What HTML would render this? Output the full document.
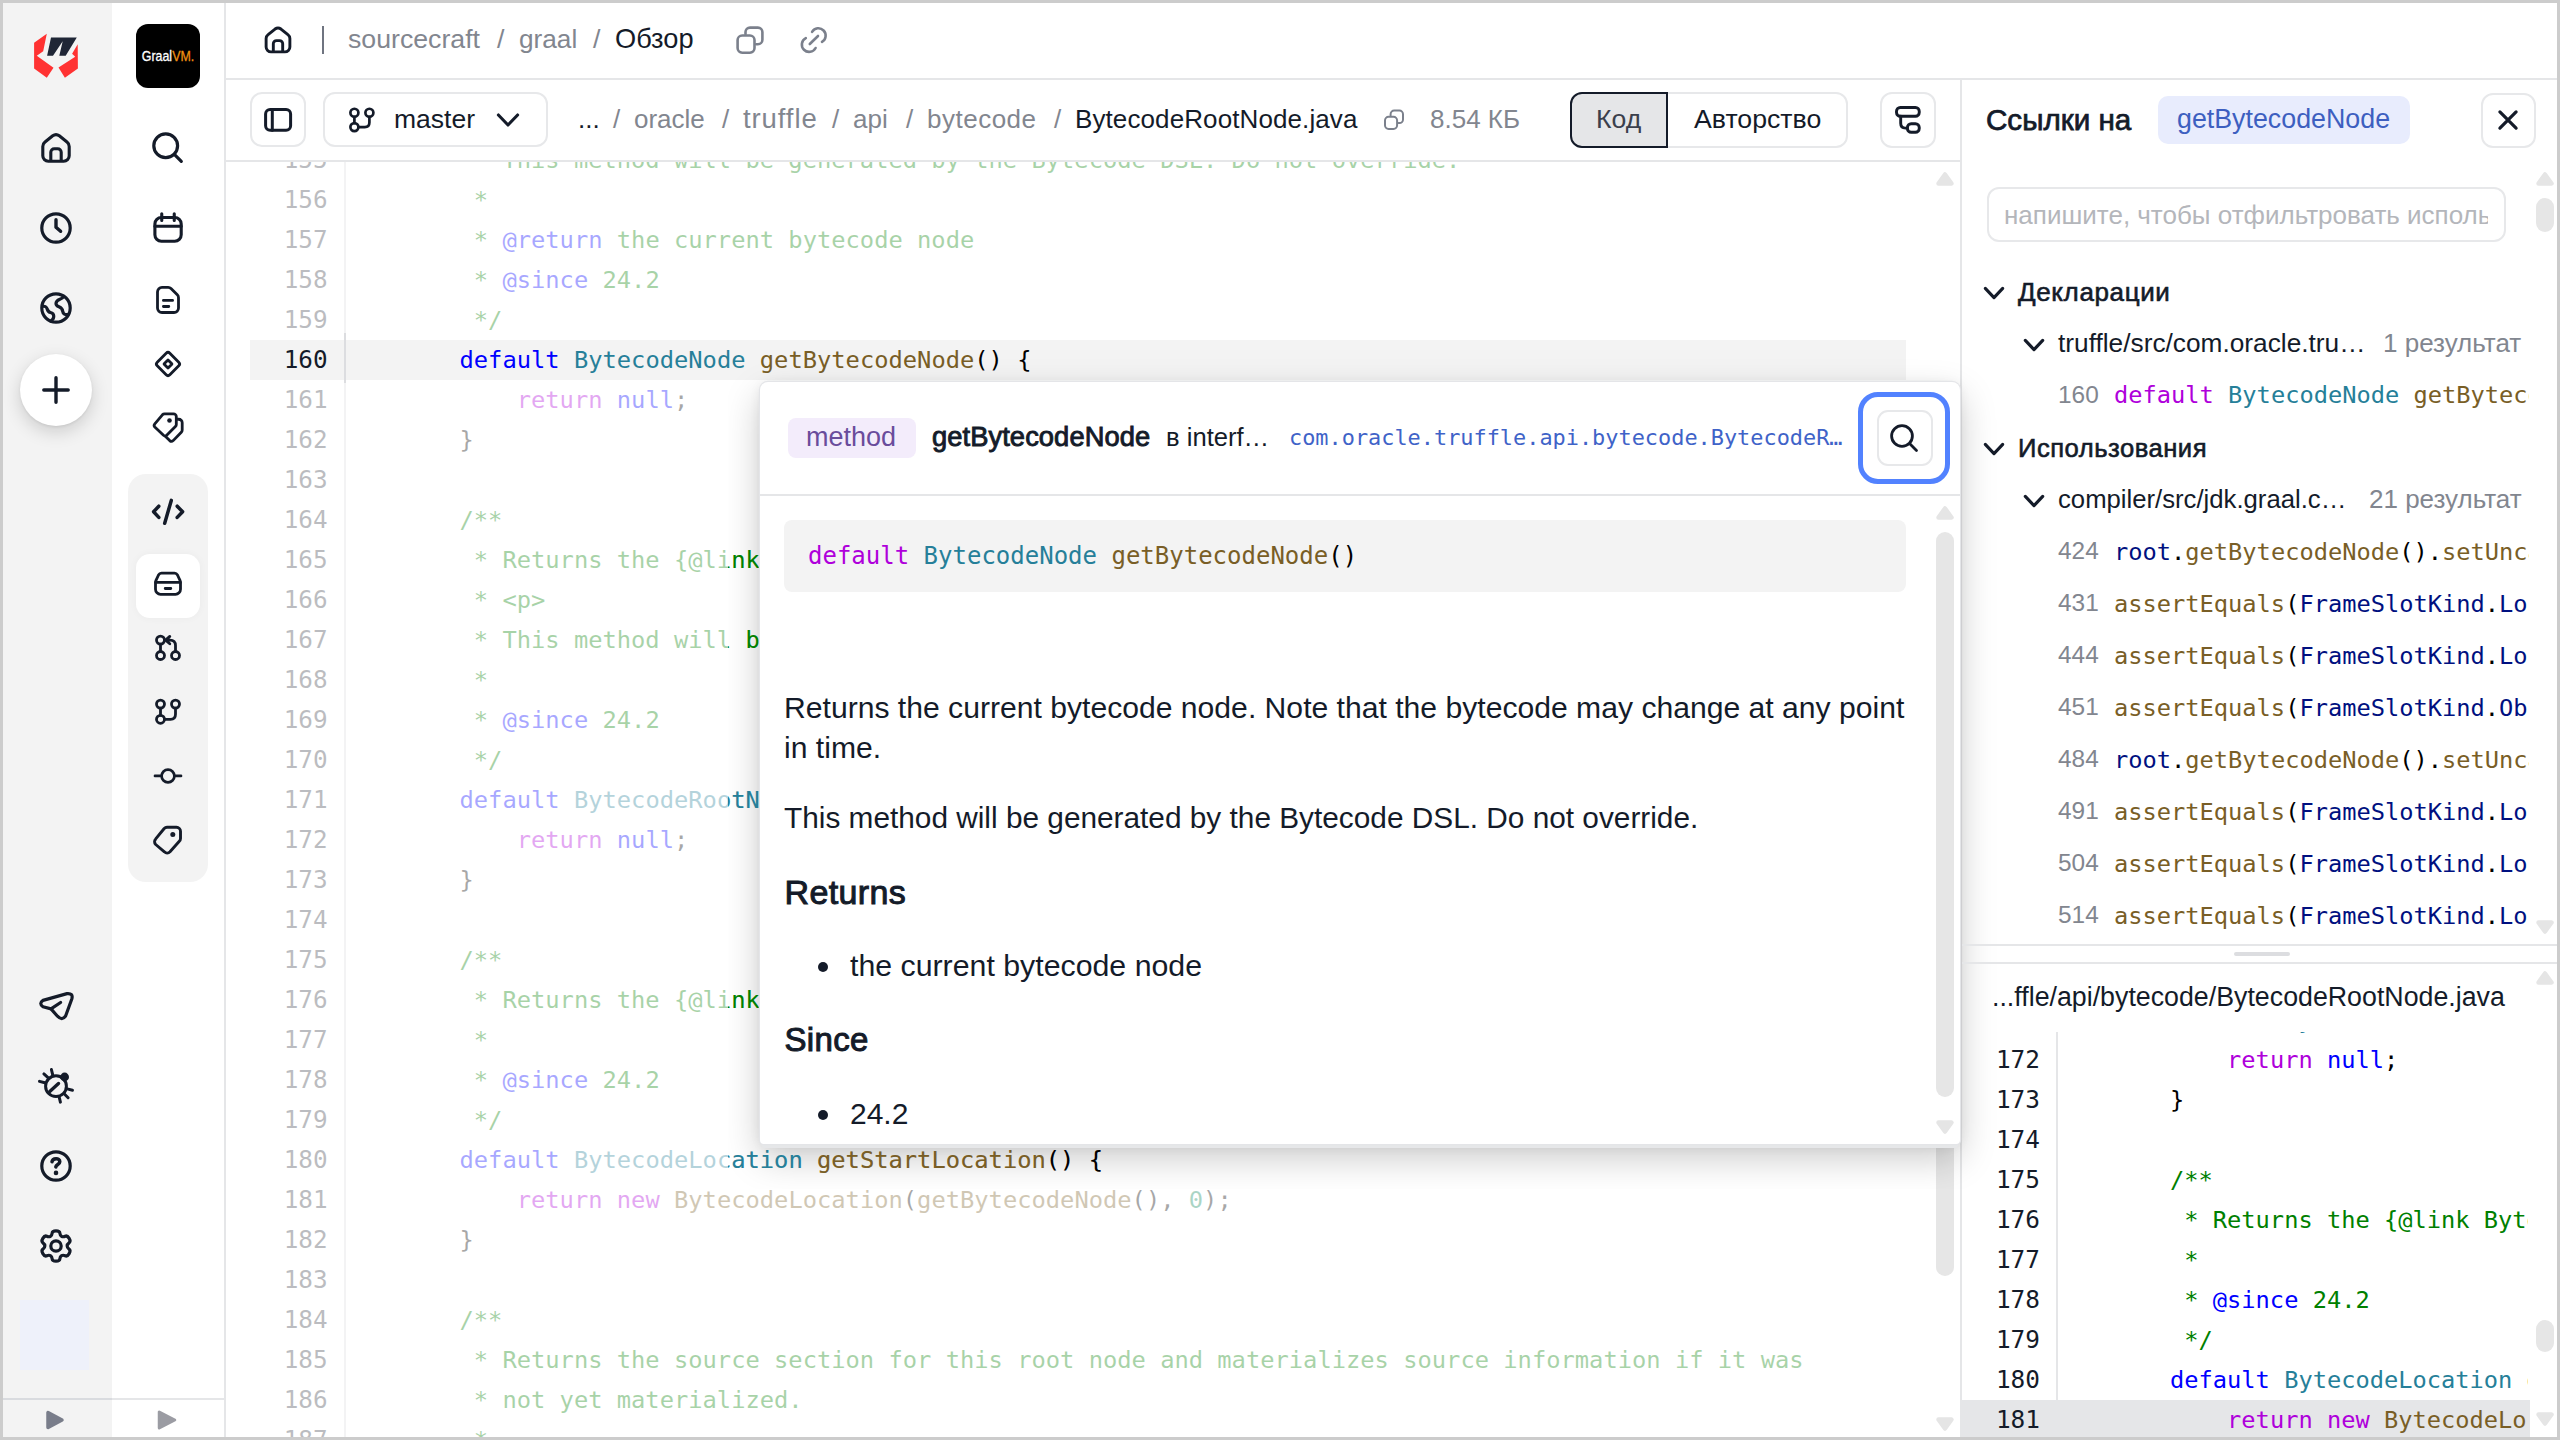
<!DOCTYPE html>
<html lang="ru">
<head>
<meta charset="utf-8">
<title>BytecodeRootNode.java — sourcecraft/graal</title>
<style>
*{box-sizing:border-box;margin:0;padding:0}
html,body{width:2560px;height:1440px;overflow:hidden;background:#fff}
body{font-family:"Liberation Sans",sans-serif;color:#141b29;position:relative;font-size:26px}
.abs{position:absolute}
svg{position:absolute;overflow:visible}
.ic{fill:none;stroke:#141b29;stroke-width:3;stroke-linecap:round;stroke-linejoin:round}
.mono{font-family:"DejaVu Sans Mono","Liberation Mono",monospace}
.t{position:absolute;white-space:pre;line-height:40px;height:40px}
.g{color:#82868f}
.md{-webkit-text-stroke:.6px currentColor}
.md2{-webkit-text-stroke:.75px currentColor}
.md3{-webkit-text-stroke:1px currentColor;letter-spacing:.35px}
/* frame */
#frame{position:absolute;left:0;top:0;width:2560px;height:1440px;border:3px solid #ccc;z-index:100;pointer-events:none}
/* rails */
#rail1{position:absolute;left:0;top:0;width:112px;height:1440px;background:#f3f3f3}
#rail2{position:absolute;left:112px;top:0;width:112px;height:1440px;background:#fff}
#vsep{position:absolute;left:224px;top:0;width:2px;height:1440px;background:#e5e6e8}
.hline{position:absolute;height:2px;background:#e5e6e8}
.btn{position:absolute;border:2px solid #e7e8ea;border-radius:12px;background:#fff}
/* code */
#codewrap{position:absolute;left:226px;top:162px;width:1734px;height:1278px;overflow:hidden;background:#fff}
.codelayer{position:absolute;left:-226px;top:-162px;width:2560px;height:1440px;font-family:"DejaVu Sans Mono","Liberation Mono",monospace;font-size:23.76px;line-height:40px;white-space:pre;color:#000}
.ln{position:absolute;left:250px;width:77.6px;text-align:right;height:40px;color:#3a3e48;font-size:24.3px}
.cl{position:absolute;left:402.3px;height:40px}
.faded .ln,.faded .cl{opacity:.34}
.faded .ln.act,.faded .cl.act{opacity:1}
.faded .ln.act{color:#141b29}
.clear .ln{display:none}
.k{color:#0000ff}.ty{color:#267f99}.f{color:#795e26}.c{color:#008000}.p{color:#af00db}.n{color:#098658}.v{color:#001080}
#actbg{position:absolute;left:250px;top:340px;width:1656px;height:40px;background:#f3f3f3}
#gutter{position:absolute;left:344px;top:162px;width:2px;height:1278px;background:#f3f3f4}
#gutteract{position:absolute;left:344px;top:333px;width:2px;height:50px;background:#dcdde0}
#clearclip{position:absolute;left:728px;top:382px;width:1232px;height:800px;overflow:hidden}
#clearclip .codelayer{left:-728px;top:-382px}
/* scrollbars */
.sbthumb{position:absolute;width:18px;border-radius:9px;background:#e6e6e6}
/* popup */
#popup{position:absolute;left:760px;top:382px;width:1200px;height:762px;background:#fff;border-radius:8px 8px 4px 4px;box-shadow:0 0 0 1.2px #e4e5e8}
/* right */
#right{position:absolute;left:1960px;top:80px;width:600px;height:1360px;background:#fff;border-left:2px solid #e5e6e8}
#rshadow{position:absolute;left:1962px;top:162px;width:30px;height:1278px;background:linear-gradient(90deg,rgba(0,0,0,.075),rgba(0,0,0,.04) 30%,rgba(0,0,0,.012) 70%,rgba(0,0,0,0));pointer-events:none}
.rnum{position:absolute;left:2058px;width:42px;height:40px;line-height:40px;color:#82868f;font-size:24.4px;white-space:pre}
.rcode{position:absolute;left:2114px;width:415px;overflow:hidden;height:40px;line-height:40px;white-space:pre;font-family:"DejaVu Sans Mono","Liberation Mono",monospace;font-size:23.7px;color:#000}
.pln{position:absolute;left:1988px;width:52px;text-align:right;height:40px;line-height:40px;font-family:"DejaVu Sans Mono","Liberation Mono",monospace;font-size:24.4px;color:#141b29;white-space:pre}
.pcl{position:absolute;left:2113px;width:415px;overflow:hidden;height:40px;line-height:40px;font-family:"DejaVu Sans Mono","Liberation Mono",monospace;font-size:23.7px;color:#000;white-space:pre}
</style>
</head>
<body>
<!-- ============ RAIL 1 ============ -->
<div id="rail1">
<div class="abs" style="left:20px;top:354px;width:72px;height:72px;border-radius:36px;background:#fff;box-shadow:0 6px 18px rgba(0,0,0,.16),0 1px 3px rgba(0,0,0,.08)"></div>
<div class="abs" style="left:19.5px;top:1300px;width:69.5px;height:69.5px;background:#eef1fa"></div>
<div class="hline" style="left:0;top:1398px;width:112px;background:#d9dbdf"></div>
</div>
<svg width="1" height="1" style="left:0;top:0"><polygon fill="#ff3232" points="46.8,33.8 34.1,42.7 34.1,68.5 46.8,77.7 53.5,67.7 36.8,55.7 43.2,51.3"/><polygon fill="#ff3232" points="77.7,44.3 77.9,68.5 64.9,77.7 58.5,67.4 75.2,56.8 72.1,53.8"/><polygon fill="#1f2636" points="51,37.4 76.8,37.4 65.7,55.7 59.3,55.7 62.7,41.2 53,55.7 47.1,55.7"/></svg>
<svg width="1" height="1" style="left:56px;top:148px" ><g fill="none" stroke="#141b29" stroke-width="3.1" stroke-linecap="round" stroke-linejoin="round"><g transform="scale(1.0)"><path d="M-7.7 13.2a5.5 5.5 0 0 1-5.5-5.5V-1.6a5.5 5.5 0 0 1 2.2-4.4L-3.3-12.2a5.5 5.5 0 0 1 6.6 0L11-6a5.5 5.5 0 0 1 2.2 4.4V7.7a5.5 5.5 0 0 1-5.5 5.5ZM-5.2 13.2V4.2a3.5 3.5 0 0 1 3.5-3.5h3.4a3.5 3.5 0 0 1 3.5 3.5V13.2"/></g></g></svg>
<svg width="1" height="1" style="left:56px;top:228px" ><g fill="none" stroke="#141b29" stroke-width="3.2" stroke-linecap="round" stroke-linejoin="round"><circle r="14.2"/><path d="M0-8.3V-0.8L4.6 3.3" stroke-width="3.4"/></g></svg>
<svg width="1" height="1" style="left:56px;top:308px" ><g fill="none" stroke="#141b29" stroke-width="3.2" stroke-linecap="round" stroke-linejoin="round"><circle r="14.2"/><path d="M7.5-11.7C6.5-8 0-9.5 0-4.6C0 0 6.3-2.5 6.7 3.3C7 6 9 7 12.5 6.3"/><path d="M-13.3-1.7C-7-2.5-10.5 3.5-5.5 4.5C-1 5.5-1.5 11-5 12.9"/></g></svg>
<svg width="1" height="1" style="left:56px;top:390px" ><g fill="none" stroke="#141b29" stroke-width="3.4" stroke-linecap="round" stroke-linejoin="round"><path d="M-12.2 0H12.2M0-12.2V12.2"/></g></svg>
<svg width="1" height="1" style="left:56px;top:1006px" ><g fill="none" stroke="#141b29" stroke-width="3.2" stroke-linecap="round" stroke-linejoin="round"><path d="M-5 2.9L-13 0.8Q-17.5-2.5-13-5.6L11-12.4Q17.5-13 15.8-7L9.6 10Q6 15 1.5 10.2Z"/><path d="M-5 2.9L4.6-3.5"/></g></svg>
<svg width="1" height="1" style="left:56px;top:1086px" ><g fill="none" stroke="#141b29" stroke-width="3.0" stroke-linecap="round" stroke-linejoin="round"><circle cx="0" cy="0.2" r="10.4"/><path d="M-6.25 5.4L2.5-2.5" stroke-width="3.4"/><circle cx="8.6" cy="-9" r="4.4" fill="#141b29" stroke="none"/><path d="M-4.6-16.5L-3.3-11.2M-12.1-12.1L-8-8.4M-16.5-4.6L-11.2-3.2M16.5 4.2L11.2 2.9M12.1 11.7L8.4 8M4.4 16.1L3.2 11.2"/></g></svg>
<svg width="1" height="1" style="left:56px;top:1166px" ><g fill="none" stroke="#141b29" stroke-width="3.2" stroke-linecap="round" stroke-linejoin="round"><circle r="14.2"/><path d="M-4-4.2C-3.5-8 3.8-8.5 3.8-4.2C3.8-1.5 0-1.5-0.2 1" stroke-width="3.5"/><circle cx="0" cy="6.9" r="2.3" fill="#141b29" stroke="none"/></g></svg>
<svg width="1" height="1" style="left:56px;top:1246px" ><g fill="none" stroke="#141b29" stroke-width="3.2" stroke-linecap="round" stroke-linejoin="round"><path d="M-3.85 -12.86Q-3.64 -15.17 0.00 -15.17Q3.64 -15.17 3.85 -12.86Q4.05 -10.55 5.58 -9.67Q7.11 -8.78 9.21 -9.76Q11.32 -10.74 13.14 -7.58Q14.96 -4.43 13.06 -3.10Q11.16 -1.77 11.16 0.00Q11.16 1.77 13.06 3.10Q14.96 4.43 13.14 7.58Q11.32 10.74 9.21 9.76Q7.11 8.78 5.58 9.67Q4.05 10.55 3.85 12.86Q3.64 15.17 0.00 15.17Q-3.64 15.17 -3.85 12.86Q-4.05 10.55 -5.58 9.67Q-7.11 8.78 -9.21 9.76Q-11.32 10.74 -13.14 7.58Q-14.96 4.43 -13.06 3.10Q-11.16 1.77 -11.16 0.00Q-11.16 -1.77 -13.06 -3.10Q-14.96 -4.43 -13.14 -7.58Q-11.32 -10.74 -9.21 -9.76Q-7.11 -8.78 -5.58 -9.67Q-4.05 -10.55 -3.85 -12.86Z"/><circle r="5.2"/></g></svg>
<svg width="1" height="1" style="left:55px;top:1419.5px"><polygon points="7.0,0 -7.0,-7.5 -7.0,7.5" fill="#797d8a" stroke="#797d8a" stroke-width="3.5" stroke-linejoin="round"/></svg>
<!-- ============ RAIL 2 ============ -->
<div id="rail2">
<div class="abs" style="left:24px;top:24px;width:64px;height:64px;border-radius:12px;background:#000"></div>
<div class="abs" style="left:24px;top:24px;width:64px;height:64px;line-height:64px;text-align:center;font-size:14.6px;color:#fff;font-weight:400;-webkit-text-stroke:.3px currentColor;transform:scaleX(.85)">Graal<span style="color:#f29111">VM.</span></div>
<div class="abs" style="left:16px;top:474px;width:80px;height:408px;border-radius:18px;background:#f3f3f3"></div>
<div class="abs" style="left:24px;top:554px;width:64px;height:64px;border-radius:14px;background:#fff;box-shadow:0 0 8px rgba(0,0,0,.04)"></div>
<div class="hline" style="left:0;top:1398px;width:112px"></div>

</div>
<svg width="1" height="1" style="left:168px;top:148px" ><g fill="none" stroke="#141b29" stroke-width="3.2" stroke-linecap="round" stroke-linejoin="round"><circle cx="-2.3" cy="-2.3" r="11.9"/><path d="M6.6 6.6L13.3 13.3"/></g></svg>
<svg width="1" height="1" style="left:168px;top:228px" ><g fill="none" stroke="#141b29" stroke-width="3.1" stroke-linecap="round" stroke-linejoin="round"><rect x="-13.1" y="-10.5" width="26.3" height="23.7" rx="6.5"/><path d="M-13.1-1.7H13.2M-6.25-14.2V-7.5M6.25-14.2V-7.5"/></g></svg>
<svg width="1" height="1" style="left:168px;top:300px" ><g fill="none" stroke="#141b29" stroke-width="2.8" stroke-linecap="round" stroke-linejoin="round"><path d="M-6-12.6H0.2Q1.8-12.6 3-11.4L9.3-5.2Q10.5-4 10.5-2.3V8a4.5 4.5 0 0 1-4.5 4.5H-6a4.5 4.5 0 0 1-4.5-4.5V-8.1a4.5 4.5 0 0 1 4.5-4.5Z"/><path d="M-4.6 0.4H4.6M-4.6 6.5H0.8"/></g></svg>
<svg width="1" height="1" style="left:168px;top:364px" ><g fill="none" stroke="#141b29" stroke-width="2.8" stroke-linecap="round" stroke-linejoin="round"><rect x="-8.9" y="-8.9" width="17.8" height="17.8" rx="2.6" transform="rotate(45)"/><rect x="-2.9" y="-2.9" width="5.8" height="5.8" rx="0.4" transform="rotate(45)"/></g></svg>
<svg width="1" height="1" style="left:168px;top:428px" ><g fill="none" stroke="#141b29" stroke-width="2.8" stroke-linecap="round" stroke-linejoin="round"><path d="M-3.5-14.2H5.5a2.8 2.8 0 0 1 2.8 2.8V-3.6Q8.3-2.4 7.4-1.5L-1.3 7.2Q-2.9 8.6-4.5 7.2L-13.2-1Q-14.6-2.6-13.2-4.2L-5.6-13.2Q-4.7-14.2-3.5-14.2Z"/><path d="M9.6-8.75H10.7a3.5 3.5 0 0 1 3.5 3.5V2Q14.2 3.3 13.3 4.2L5.2 12.6Q3.5 14.2 1.7 12.6L-2.7 8.2"/><circle cx="1.5" cy="-7.5" r="2.3" fill="#141b29" stroke="none"/></g></svg>
<svg width="1" height="1" style="left:168px;top:512px" ><g fill="none" stroke="#141b29" stroke-width="3.5" stroke-linecap="round" stroke-linejoin="round"><path d="M-9.2-5.8L-14.4-0.2L-9.2 5.4M9.2-5.8L14.6-0.2L9.2 5.4M3.3-11.6L-3.3 11.2"/></g></svg>
<svg width="1" height="1" style="left:168px;top:584px" ><g fill="none" stroke="#141b29" stroke-width="2.8" stroke-linecap="round" stroke-linejoin="round"><path d="M-6.5-10.8H6.5Q8.5-10.8 9.5-9L12-3.7Q12.5-2.6 12.5-1.2V5.3a5 5 0 0 1-5 5H-7.5a5 5 0 0 1-5-5V-1.2Q-12.5-2.6-12-3.7L-9.5-9Q-8.5-10.8-6.5-10.8Z"/><path d="M-12.3-1.6H12.3M-2.8 4.5H2.8"/></g></svg>
<svg width="1" height="1" style="left:168px;top:648px" ><g fill="none" stroke="#141b29" stroke-width="2.8" stroke-linecap="round" stroke-linejoin="round"><circle cx="-7.5" cy="-7.9" r="4"/><circle cx="-7.5" cy="7.5" r="4"/><circle cx="7.5" cy="7.5" r="4"/><path d="M-7.5-3.9V3.5M7.5 3.5V-2.5Q7.5-7.9 2-7.9H-2M1.8-11.6L-2.4-7.9L1.8-4.2"/></g></svg>
<svg width="1" height="1" style="left:168px;top:712px" ><g fill="none" stroke="#141b29" stroke-width="2.8" stroke-linecap="round" stroke-linejoin="round"><circle cx="-7.5" cy="-7.9" r="4"/><circle cx="7.5" cy="-7.9" r="4"/><circle cx="-7.5" cy="7.3" r="4"/><path d="M-7.5-3.9V3.3M7.5-3.9V2.3Q7.5 7.3 2.5 7.3H-3.5"/></g></svg>
<svg width="1" height="1" style="left:168px;top:776px" ><g fill="none" stroke="#141b29" stroke-width="2.7" stroke-linecap="round" stroke-linejoin="round"><circle r="6.4"/><path d="M-13-0.1H-7.2M7.2-0.1H13"/></g></svg>
<svg width="1" height="1" style="left:168px;top:840px" ><g fill="none" stroke="#141b29" stroke-width="2.9" stroke-linecap="round" stroke-linejoin="round"><path d="M-1-12.7H8.5a4 4 0 0 1 4 4V-1.5a4 4 0 0 1-1.2 2.8L2 11.8a4 4 0 0 1-5.6 0L-12.3 4.5a4 4 0 0 1 0-5.6L-3.8-11.5a4 4 0 0 1 2.8-1.2Z"/><circle cx="4.8" cy="-5.4" r="2.5" fill="#141b29" stroke="none"/></g></svg>
<svg width="1" height="1" style="left:167px;top:1420px"><polygon points="7.75,0 -7.75,-8.0 -7.75,8.0" fill="#9b9ca3" stroke="#9b9ca3" stroke-width="3" stroke-linejoin="round"/></svg>
<div id="vsep"></div>
<!-- ============ TOP BAR ============ -->
<div class="abs" id="topbar" style="left:226px;top:0;width:2334px;height:78px;background:#fff">
<div class="abs" style="left:96px;top:26px;width:2px;height:28px;background:#6f7480"></div>
<div class="t g" style="left:122px;top:19px;font-size:26.7px">sourcecraft</div>
<div class="t g" style="left:271px;top:19px;font-size:26.7px">/</div>
<div class="t g" style="left:293px;top:19px;font-size:26.2px">graal</div>
<div class="t g" style="left:367px;top:19px;font-size:26.7px">/</div>
<div class="t" style="left:389px;top:19px;font-size:27.2px">Обзор</div>

</div>
<svg width="1" height="1" style="left:278px;top:40px" ><g fill="none" stroke="#141b29" stroke-width="3.222222222222222" stroke-linecap="round" stroke-linejoin="round"><g transform="scale(0.9)"><path d="M-7.7 13.2a5.5 5.5 0 0 1-5.5-5.5V-1.6a5.5 5.5 0 0 1 2.2-4.4L-3.3-12.2a5.5 5.5 0 0 1 6.6 0L11-6a5.5 5.5 0 0 1 2.2 4.4V7.7a5.5 5.5 0 0 1-5.5 5.5ZM-5.2 13.2V4.2a3.5 3.5 0 0 1 3.5-3.5h3.4a3.5 3.5 0 0 1 3.5 3.5V13.2"/></g></g></svg>
<svg width="1" height="1" style="left:0px;top:0px" ><g fill="none" stroke="#7b808c" stroke-width="2.6" stroke-linecap="round" stroke-linejoin="round"><rect x="737.6" y="35.5" width="16.9" height="17.2" rx="4.6"/><path d="M745.5 34V32.1a4.5 4.5 0 0 1 4.5-4.5H757.9a4.5 4.5 0 0 1 4.5 4.5V39.7a4.5 4.5 0 0 1-4.5 4.5H756.2"/></g></svg>
<svg width="1" height="1" style="left:0px;top:0px" ><g fill="none" stroke="#7b808c" stroke-width="2.6" stroke-linecap="round" stroke-linejoin="round"><path d="M809.8 44L818 36"/><path d="M812.1 31.8A7.3 7.3 0 1 1 822 41.9"/><path d="M815.6 48A7.3 7.3 0 1 1 805.8 38.1"/></g></svg>
<div class="hline" style="left:226px;top:78px;width:2334px"></div>
<!-- ============ FILE BAR ============ -->
<div class="abs" id="filebar" style="left:226px;top:80px;width:1734px;height:80px;background:#fff">
<div class="btn" style="left:24.3px;top:12px;width:55.3px;height:55.3px"></div>
<div class="btn" style="left:96.5px;top:12px;width:225px;height:55px"></div>
<div class="t" style="left:168px;top:19px;font-size:26.5px">master</div>
<div class="t" style="left:352px;top:19px">...</div>
<div class="t g" style="left:387px;top:19px">/</div>
<div class="t g" style="left:408px;top:19px">oracle</div>
<div class="t g" style="left:496px;top:19px">/</div>
<div class="t g" style="left:517px;top:19px;font-size:27.5px;letter-spacing:.9px">truffle</div>
<div class="t g" style="left:606px;top:19px">/</div>
<div class="t g" style="left:627px;top:19px">api</div>
<div class="t g" style="left:680px;top:19px">/</div>
<div class="t g" style="left:701px;top:19px;letter-spacing:.5px">bytecode</div>
<div class="t g" style="left:828px;top:19px">/</div>
<div class="t" style="left:849px;top:19px;letter-spacing:.1px">BytecodeRootNode.java</div>
<div class="t g" style="left:1204px;top:19px">8.54 КБ</div>
<div class="abs" style="left:1344px;top:12px;width:278px;height:56px;border:2px solid #e7e8ea;border-radius:12px"></div>
<div class="abs" style="left:1344px;top:12px;width:98px;height:56px;border:2px solid #141b29;border-radius:12px 0 0 12px;background:#e5e6e8"></div>
<div class="t" style="left:1370px;top:19px;color:#3b404c;font-size:26.6px">Код</div>
<div class="t" style="left:1468px;top:19px;font-size:26.7px">Авторство</div>
<div class="btn" style="left:1654.3px;top:12px;width:55.5px;height:55.5px"></div>

</div>
<svg width="1" height="1" style="left:0px;top:0px" ><g fill="none" stroke="#141b29" stroke-width="3" stroke-linecap="round" stroke-linejoin="round"><rect x="265.6" y="109.6" width="25" height="20.7" rx="4.5"/><path d="M272.3 109.6V130.3"/></g></svg>
<svg width="1" height="1" style="left:0px;top:0px" ><g fill="none" stroke="#141b29" stroke-width="2.7" stroke-linecap="round" stroke-linejoin="round"><circle cx="354.4" cy="112.75" r="4"/><circle cx="369.4" cy="112.75" r="4"/><circle cx="354.4" cy="127.1" r="4"/><path d="M354.4 116.75V123.1M369.4 116.75V122.5Q369.4 127.1 364.8 127.1H358.4"/></g></svg>
<svg width="1" height="1" style="left:507.8px;top:120.2px" ><g fill="none" stroke="#141b29" stroke-width="3.1" stroke-linecap="round" stroke-linejoin="round"><path d="M-9.6 -5L0 5L9.6 -5"/></g></svg>
<svg width="1" height="1" style="left:0px;top:0px" ><g fill="none" stroke="#7b808c" stroke-width="2" stroke-linecap="round" stroke-linejoin="round"><rect x="1385" y="116.8" width="12.1" height="12.1" rx="3.6"/><path d="M1390.6 115.6V114.2a3.6 3.6 0 0 1 3.6-3.6H1399.4a3.6 3.6 0 0 1 3.6 3.6V119.4a3.6 3.6 0 0 1-3.6 3.6H1398.4"/></g></svg>
<svg width="1" height="1" style="left:0px;top:0px" ><g fill="none" stroke="#141b29" stroke-width="2.9" stroke-linecap="round" stroke-linejoin="round"><rect x="1896.5" y="107.5" width="22.75" height="8.75" rx="3.8"/><rect x="1907.4" y="123.75" width="11.85" height="8.55" rx="3.8"/><path d="M1900.7 116.25V123.3Q1900.7 128.1 1905.4 128.1H1907.4"/></g></svg>
<div class="hline" style="left:226px;top:160px;width:2334px"></div>
<!-- ============ CODE ============ -->
<div id="codewrap">
<div class="abs" style="left:0;top:0;width:1734px;height:1278px">
</div>
</div>
<div id="actbg"></div>
<div id="gutter"></div><div id="gutteract"></div>
<div class="abs" style="left:226px;top:162px;width:1734px;height:1278px;overflow:hidden"><div class="codelayer faded"><div class="ln" style="top:140px">155</div><div class="cl" style="top:140px"><span class="c">     * This method will be generated by the Bytecode DSL. Do not override.</span></div><div class="ln" style="top:180px">156</div><div class="cl" style="top:180px"><span class="c">     *</span></div><div class="ln" style="top:220px">157</div><div class="cl" style="top:220px"><span class="c">     * </span><span class="k">@return</span><span class="c"> the current bytecode node</span></div><div class="ln" style="top:260px">158</div><div class="cl" style="top:260px"><span class="c">     * </span><span class="k">@since</span><span class="c"> 24.2</span></div><div class="ln" style="top:300px">159</div><div class="cl" style="top:300px"><span class="c">     */</span></div><div class="ln act" style="top:340px">160</div><div class="cl act" style="top:340px">    <span class="k">default</span> <span class="ty">BytecodeNode</span> <span class="f">getBytecodeNode</span>() {</div><div class="ln" style="top:380px">161</div><div class="cl" style="top:380px">        <span class="p">return</span> <span class="k">null</span>;</div><div class="ln" style="top:420px">162</div><div class="cl" style="top:420px">    }</div><div class="ln" style="top:460px">163</div><div class="cl" style="top:460px"></div><div class="ln" style="top:500px">164</div><div class="cl" style="top:500px"><span class="c">    /**</span></div><div class="ln" style="top:540px">165</div><div class="cl" style="top:540px"><span class="c">     * Returns the {@link BytecodeRootNodes} instance associated with this root node.</span></div><div class="ln" style="top:580px">166</div><div class="cl" style="top:580px"><span class="c">     * &lt;p&gt;</span></div><div class="ln" style="top:620px">167</div><div class="cl" style="top:620px"><span class="c">     * This method will be generated by the Bytecode DSL. Do not override.</span></div><div class="ln" style="top:660px">168</div><div class="cl" style="top:660px"><span class="c">     *</span></div><div class="ln" style="top:700px">169</div><div class="cl" style="top:700px"><span class="c">     * </span><span class="k">@since</span><span class="c"> 24.2</span></div><div class="ln" style="top:740px">170</div><div class="cl" style="top:740px"><span class="c">     */</span></div><div class="ln" style="top:780px">171</div><div class="cl" style="top:780px">    <span class="k">default</span> <span class="ty">BytecodeRootNodes</span>&lt;?&gt; <span class="f">getRootNodes</span>() {</div><div class="ln" style="top:820px">172</div><div class="cl" style="top:820px">        <span class="p">return</span> <span class="k">null</span>;</div><div class="ln" style="top:860px">173</div><div class="cl" style="top:860px">    }</div><div class="ln" style="top:900px">174</div><div class="cl" style="top:900px"></div><div class="ln" style="top:940px">175</div><div class="cl" style="top:940px"><span class="c">    /**</span></div><div class="ln" style="top:980px">176</div><div class="cl" style="top:980px"><span class="c">     * Returns the {@link BytecodeLocation} associated with the start of this root node.</span></div><div class="ln" style="top:1020px">177</div><div class="cl" style="top:1020px"><span class="c">     *</span></div><div class="ln" style="top:1060px">178</div><div class="cl" style="top:1060px"><span class="c">     * </span><span class="k">@since</span><span class="c"> 24.2</span></div><div class="ln" style="top:1100px">179</div><div class="cl" style="top:1100px"><span class="c">     */</span></div><div class="ln" style="top:1140px">180</div><div class="cl" style="top:1140px">    <span class="k">default</span> <span class="ty">BytecodeLocation</span> <span class="f">getStartLocation</span>() {</div><div class="ln" style="top:1180px">181</div><div class="cl" style="top:1180px">        <span class="p">return</span> <span class="p">new</span> <span class="f">BytecodeLocation</span>(<span class="f">getBytecodeNode</span>(), <span class="n">0</span>);</div><div class="ln" style="top:1220px">182</div><div class="cl" style="top:1220px">    }</div><div class="ln" style="top:1260px">183</div><div class="cl" style="top:1260px"></div><div class="ln" style="top:1300px">184</div><div class="cl" style="top:1300px"><span class="c">    /**</span></div><div class="ln" style="top:1340px">185</div><div class="cl" style="top:1340px"><span class="c">     * Returns the source section for this root node and materializes source information if it was</span></div><div class="ln" style="top:1380px">186</div><div class="cl" style="top:1380px"><span class="c">     * not yet materialized.</span></div><div class="ln" style="top:1420px">187</div><div class="cl" style="top:1420px"><span class="c">     *</span></div></div></div>
<!-- main scrollbar -->
<svg width="1" height="1" style="left:1945px;top:178.5px"><polygon points="0,-4.5 6.5,4.5 -6.5,4.5" fill="#e5e5e5" stroke="#e5e5e5" stroke-width="4.5" stroke-linejoin="round"/></svg><svg width="1" height="1" style="left:1945px;top:1423.5px"><polygon points="0,4.5 6.5,-4.5 -6.5,-4.5" fill="#e5e5e5" stroke="#e5e5e5" stroke-width="4.5" stroke-linejoin="round"/></svg>
<div class="sbthumb" style="left:1936px;top:1100px;height:176px"></div>
<!-- popup shadow + clear code -->
<div id="right"></div>
<div class="abs" style="left:728px;top:300px;width:1300px;height:889px;overflow:hidden;pointer-events:none"><div class="abs" style="left:32px;top:82px;width:1200px;height:762px;border-radius:8px;box-shadow:0 14px 36px rgba(0,0,0,.21),0 2px 12px rgba(0,0,0,.07)"></div></div>
<div class="abs" style="left:762px;top:1143px;width:1196px;height:5px;background:#e6e7e9;border-radius:0 0 3px 3px"></div>
<div id="clearclip"><div class="codelayer clear"><div class="ln" style="top:140px">155</div><div class="cl" style="top:140px"><span class="c">     * This method will be generated by the Bytecode DSL. Do not override.</span></div><div class="ln" style="top:180px">156</div><div class="cl" style="top:180px"><span class="c">     *</span></div><div class="ln" style="top:220px">157</div><div class="cl" style="top:220px"><span class="c">     * </span><span class="k">@return</span><span class="c"> the current bytecode node</span></div><div class="ln" style="top:260px">158</div><div class="cl" style="top:260px"><span class="c">     * </span><span class="k">@since</span><span class="c"> 24.2</span></div><div class="ln" style="top:300px">159</div><div class="cl" style="top:300px"><span class="c">     */</span></div><div class="ln act" style="top:340px">160</div><div class="cl act" style="top:340px">    <span class="k">default</span> <span class="ty">BytecodeNode</span> <span class="f">getBytecodeNode</span>() {</div><div class="ln" style="top:380px">161</div><div class="cl" style="top:380px">        <span class="p">return</span> <span class="k">null</span>;</div><div class="ln" style="top:420px">162</div><div class="cl" style="top:420px">    }</div><div class="ln" style="top:460px">163</div><div class="cl" style="top:460px"></div><div class="ln" style="top:500px">164</div><div class="cl" style="top:500px"><span class="c">    /**</span></div><div class="ln" style="top:540px">165</div><div class="cl" style="top:540px"><span class="c">     * Returns the {@link BytecodeRootNodes} instance associated with this root node.</span></div><div class="ln" style="top:580px">166</div><div class="cl" style="top:580px"><span class="c">     * &lt;p&gt;</span></div><div class="ln" style="top:620px">167</div><div class="cl" style="top:620px"><span class="c">     * This method will be generated by the Bytecode DSL. Do not override.</span></div><div class="ln" style="top:660px">168</div><div class="cl" style="top:660px"><span class="c">     *</span></div><div class="ln" style="top:700px">169</div><div class="cl" style="top:700px"><span class="c">     * </span><span class="k">@since</span><span class="c"> 24.2</span></div><div class="ln" style="top:740px">170</div><div class="cl" style="top:740px"><span class="c">     */</span></div><div class="ln" style="top:780px">171</div><div class="cl" style="top:780px">    <span class="k">default</span> <span class="ty">BytecodeRootNodes</span>&lt;?&gt; <span class="f">getRootNodes</span>() {</div><div class="ln" style="top:820px">172</div><div class="cl" style="top:820px">        <span class="p">return</span> <span class="k">null</span>;</div><div class="ln" style="top:860px">173</div><div class="cl" style="top:860px">    }</div><div class="ln" style="top:900px">174</div><div class="cl" style="top:900px"></div><div class="ln" style="top:940px">175</div><div class="cl" style="top:940px"><span class="c">    /**</span></div><div class="ln" style="top:980px">176</div><div class="cl" style="top:980px"><span class="c">     * Returns the {@link BytecodeLocation} associated with the start of this root node.</span></div><div class="ln" style="top:1020px">177</div><div class="cl" style="top:1020px"><span class="c">     *</span></div><div class="ln" style="top:1060px">178</div><div class="cl" style="top:1060px"><span class="c">     * </span><span class="k">@since</span><span class="c"> 24.2</span></div><div class="ln" style="top:1100px">179</div><div class="cl" style="top:1100px"><span class="c">     */</span></div><div class="ln" style="top:1140px">180</div><div class="cl" style="top:1140px">    <span class="k">default</span> <span class="ty">BytecodeLocation</span> <span class="f">getStartLocation</span>() {</div><div class="ln" style="top:1180px">181</div><div class="cl" style="top:1180px">        <span class="p">return</span> <span class="p">new</span> <span class="f">BytecodeLocation</span>(<span class="f">getBytecodeNode</span>(), <span class="n">0</span>);</div><div class="ln" style="top:1220px">182</div><div class="cl" style="top:1220px">    }</div><div class="ln" style="top:1260px">183</div><div class="cl" style="top:1260px"></div><div class="ln" style="top:1300px">184</div><div class="cl" style="top:1300px"><span class="c">    /**</span></div><div class="ln" style="top:1340px">185</div><div class="cl" style="top:1340px"><span class="c">     * Returns the source section for this root node and materializes source information if it was</span></div><div class="ln" style="top:1380px">186</div><div class="cl" style="top:1380px"><span class="c">     * not yet materialized.</span></div><div class="ln" style="top:1420px">187</div><div class="cl" style="top:1420px"><span class="c">     *</span></div></div></div>
<!-- ============ POPUP ============ -->
<div id="popup">
<div class="abs" style="left:28px;top:36px;width:128px;height:40px;border-radius:8px;background:#f3ecfb"></div>
<div class="t" style="left:46px;top:35px;color:#6a4c9c;font-size:27px">method</div>
<div class="t" style="left:172px;top:35px;font-size:27.3px;-webkit-text-stroke:.9px currentColor;letter-spacing:.08px">getBytecodeNode</div>
<div class="t" style="left:406px;top:35px;font-size:25.6px">в interf…</div>
<div class="t mono" style="left:529px;top:36px;font-size:21.9px;color:#3f63c8">com.oracle.truffle.api.bytecode.BytecodeR…</div>
<div class="abs" style="left:1098px;top:10px;width:92px;height:92px;border:5px solid #5282ff;border-radius:20px"></div>
<div class="btn" style="left:1116.5px;top:28px;width:56px;height:56px;border-width:2px;border-radius:11px"></div>
<div class="hline" style="left:0;top:112px;width:1200px"></div>
<div class="abs" style="left:24px;top:138px;width:1122px;height:72px;border-radius:8px;background:#f3f3f3"></div>
<div class="t mono" style="left:48px;top:154px;font-size:24px;color:#000"><span class="p">default</span> <span class="ty">BytecodeNode</span> <span class="f">getBytecodeNode</span>()</div>
<div class="t" style="left:24px;top:306px;font-size:30.13px">Returns the current bytecode node. Note that the bytecode may change at any point</div>
<div class="t" style="left:24px;top:346px;font-size:30.13px">in time.</div>
<div class="t" style="left:24px;top:416px;font-size:29.8px">This method will be generated by the Bytecode DSL. Do not override.</div>
<div class="t md3" style="left:24.5px;top:489.5px;font-size:34px">Returns</div>
<div class="abs" style="left:58px;top:580px;width:10px;height:10px;border-radius:5px;background:#141b29"></div>
<div class="t" style="left:90px;top:564px;font-size:30.3px">the current bytecode node</div>
<div class="t md3" style="left:24.5px;top:637.5px;font-size:33px">Since</div>
<div class="abs" style="left:58px;top:728px;width:10px;height:10px;border-radius:5px;background:#141b29"></div>
<div class="t" style="left:90px;top:712px;font-size:30px">24.2</div>
<div class="sbthumb" style="left:1176px;top:150px;height:564.5px"></div>
</div>
<svg width="1" height="1" style="left:1902px;top:436px" ><g fill="none" stroke="#141b29" stroke-width="2.8" stroke-linecap="round" stroke-linejoin="round"><circle r="10.4"/><path d="M7.8 7.8L14.5 14.5"/></g></svg>
<svg width="1" height="1" style="left:1945px;top:513px"><polygon points="0,-4.5 6.5,4.5 -6.5,4.5" fill="#e5e5e5" stroke="#e5e5e5" stroke-width="4.5" stroke-linejoin="round"/></svg><svg width="1" height="1" style="left:1945px;top:1127px"><polygon points="0,4.5 6.5,-4.5 -6.5,-4.5" fill="#e5e5e5" stroke="#e5e5e5" stroke-width="4.5" stroke-linejoin="round"/></svg>
<!-- ============ RIGHT PANEL ============ -->
<div class="t md2" style="left:1986px;top:99.5px;font-size:29.6px">Ссылки на</div>
<div class="abs" style="left:2158px;top:96px;width:252px;height:48px;border-radius:10px;background:#e8ecfd"></div>
<div class="t" style="left:2177px;top:99px;font-size:26.8px;color:#3d5fc0">getBytecodeNode</div>
<div class="btn" style="left:2481px;top:93px;width:55px;height:55px"></div>
<svg width="1" height="1" style="left:2508px;top:120px" ><g fill="none" stroke="#141b29" stroke-width="3.2" stroke-linecap="round" stroke-linejoin="round"><path d="M-8.1-8.1L8.1 8.1M8.1-8.1L-8.1 8.1"/></g></svg>
<div class="abs" style="left:1986.5px;top:186.5px;width:519.5px;height:55px;border:2px solid #e7e8ea;border-radius:12px"></div>
<div class="t" style="left:2004px;top:195px;color:#b4b6bb;width:484px;overflow:hidden">напишите, чтобы отфильтровать исполь</div>
<svg width="1" height="1" style="left:2545px;top:178.5px"><polygon points="0,-4.5 6.5,4.5 -6.5,4.5" fill="#e5e5e5" stroke="#e5e5e5" stroke-width="4.5" stroke-linejoin="round"/></svg><svg width="1" height="1" style="left:2545px;top:927px"><polygon points="0,4.5 6.5,-4.5 -6.5,-4.5" fill="#e5e5e5" stroke="#e5e5e5" stroke-width="4.5" stroke-linejoin="round"/></svg>
<div class="sbthumb" style="left:2536px;top:198px;height:34px"></div>
<svg width="1" height="1" style="left:1994.3px;top:293px" ><g fill="none" stroke="#141b29" stroke-width="3.1" stroke-linecap="round" stroke-linejoin="round"><path d="M-8.7 -4.6L0 4.6L8.7 -4.6"/></g></svg>
<div class="t md" style="left:2018px;top:271.5px;font-size:26px;letter-spacing:.62px">Декларации</div>
<svg width="1" height="1" style="left:2034px;top:344.8px" ><g fill="none" stroke="#141b29" stroke-width="3.1" stroke-linecap="round" stroke-linejoin="round"><path d="M-8.7 -4.6L0 4.6L8.7 -4.6"/></g></svg>
<div class="t" style="left:2058px;top:323px;font-size:26.27px">truffle/src/com.oracle.tru…</div>
<div class="t g" style="left:2383px;top:323px">1 результат</div>
<div class="rnum" style="top:375px">160</div><div class="rcode" style="top:375px"><span class="p">default</span> <span class="ty">BytecodeNode</span> <span class="f">getBytecodeNode</span>() {</div>
<svg width="1" height="1" style="left:1994.3px;top:449px" ><g fill="none" stroke="#141b29" stroke-width="3.1" stroke-linecap="round" stroke-linejoin="round"><path d="M-8.7 -4.6L0 4.6L8.7 -4.6"/></g></svg>
<div class="t md" style="left:2018px;top:427.5px;font-size:25.6px;letter-spacing:.5px">Использования</div>
<svg width="1" height="1" style="left:2034px;top:500.8px" ><g fill="none" stroke="#141b29" stroke-width="3.1" stroke-linecap="round" stroke-linejoin="round"><path d="M-8.7 -4.6L0 4.6L8.7 -4.6"/></g></svg>
<div class="t" style="left:2058px;top:479px;font-size:25.7px">compiler/src/jdk.graal.c…</div>
<div class="t g" style="left:2369px;top:479px">21 результат</div>
<div class="rnum" style="top:531px">424</div><div class="rcode" style="top:532px"><span class="v">root</span>.<span class="f">getBytecodeNode</span>().<span class="f">setUncachedThreshold</span>(0);</div><div class="rnum" style="top:583px">431</div><div class="rcode" style="top:584px"><span class="f">assertEquals</span>(<span class="v">FrameSlotKind</span>.<span class="v">Long</span>, root.getBytecodeNode()</div><div class="rnum" style="top:635px">444</div><div class="rcode" style="top:636px"><span class="f">assertEquals</span>(<span class="v">FrameSlotKind</span>.<span class="v">Long</span>, root.getBytecodeNode()</div><div class="rnum" style="top:687px">451</div><div class="rcode" style="top:688px"><span class="f">assertEquals</span>(<span class="v">FrameSlotKind</span>.<span class="v">Object</span>, root.getBytecodeNode()</div><div class="rnum" style="top:739px">484</div><div class="rcode" style="top:740px"><span class="v">root</span>.<span class="f">getBytecodeNode</span>().<span class="f">setUncachedThreshold</span>(0);</div><div class="rnum" style="top:791px">491</div><div class="rcode" style="top:792px"><span class="f">assertEquals</span>(<span class="v">FrameSlotKind</span>.<span class="v">Long</span>, root.getBytecodeNode()</div><div class="rnum" style="top:843px">504</div><div class="rcode" style="top:844px"><span class="f">assertEquals</span>(<span class="v">FrameSlotKind</span>.<span class="v">Long</span>, root.getBytecodeNode()</div><div class="rnum" style="top:895px">514</div><div class="rcode" style="top:896px"><span class="f">assertEquals</span>(<span class="v">FrameSlotKind</span>.<span class="v">Long</span>, root.getBytecodeNode()</div>
<div class="hline" style="left:1962px;top:944px;width:598px"></div>
<div class="abs" style="left:2234px;top:952px;width:56px;height:4px;border-radius:2px;background:#dcdde0"></div>
<div class="hline" style="left:1962px;top:962px;width:598px"></div>
<div class="t" style="left:1992px;top:977px;font-size:26.77px">...ffle/api/bytecode/BytecodeRootNode.java</div>
<div class="abs" style="left:1962px;top:1032px;width:598px;height:408px;overflow:hidden">
<div class="abs" style="left:-1962px;top:-1032px;width:2560px;height:1440px">
<div class="abs" style="left:1962px;top:1400px;width:568px;height:40px;background:#e5e6e8"></div>
<div class="abs" style="left:2056px;top:1032px;width:2px;height:408px;background:#e5e6e8"></div>
<div class="pln" style="top:1000px">171</div><div class="pcl" style="top:1000px">    <span class="k">default</span> <span class="ty">BytecodeRootNodes</span>&lt;?&gt; <span class="f">getRootNodes</span>() {</div><div class="pln" style="top:1040px">172</div><div class="pcl" style="top:1040px">        <span class="p">return</span> <span class="k">null</span>;</div><div class="pln" style="top:1080px">173</div><div class="pcl" style="top:1080px">    }</div><div class="pln" style="top:1120px">174</div><div class="pcl" style="top:1120px"></div><div class="pln" style="top:1160px">175</div><div class="pcl" style="top:1160px"><span class="c">    /**</span></div><div class="pln" style="top:1200px">176</div><div class="pcl" style="top:1200px"><span class="c">     * Returns the {@link BytecodeLocation} associated with the start</span></div><div class="pln" style="top:1240px">177</div><div class="pcl" style="top:1240px"><span class="c">     *</span></div><div class="pln" style="top:1280px">178</div><div class="pcl" style="top:1280px"><span class="c">     * </span><span class="k">@since</span><span class="c"> 24.2</span></div><div class="pln" style="top:1320px">179</div><div class="pcl" style="top:1320px"><span class="c">     */</span></div><div class="pln" style="top:1360px">180</div><div class="pcl" style="top:1360px">    <span class="k">default</span> <span class="ty">BytecodeLocation</span> <span class="f">getStartLocation</span>() {</div><div class="pln" style="top:1400px">181</div><div class="pcl" style="top:1400px">        <span class="p">return</span> <span class="p">new</span> <span class="f">BytecodeLocation</span>(<span class="f">getBytecodeNode</span>(), <span class="n">0</span>);</div>
</div></div>
<svg width="1" height="1" style="left:2545px;top:978px"><polygon points="0,-4.5 6.5,4.5 -6.5,4.5" fill="#e5e5e5" stroke="#e5e5e5" stroke-width="4.5" stroke-linejoin="round"/></svg><svg width="1" height="1" style="left:2545px;top:1418.5px"><polygon points="0,4.5 6.5,-4.5 -6.5,-4.5" fill="#e5e5e5" stroke="#e5e5e5" stroke-width="4.5" stroke-linejoin="round"/></svg>
<div class="sbthumb" style="left:2536px;top:1320px;height:32px"></div>
<div id="frame"></div>
</body>
</html>
